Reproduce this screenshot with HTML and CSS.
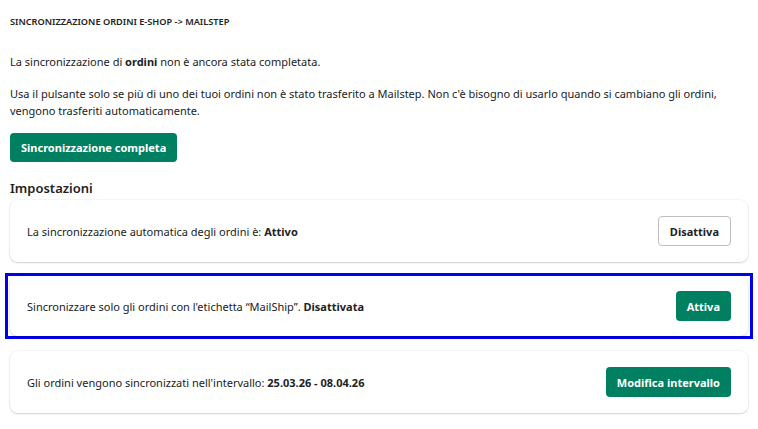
FILE: index.html
```html
<!DOCTYPE html>
<html lang="it">
<head>
    <meta charset="UTF-8">
    <meta name="viewport" content="width=device-width, initial-scale=1.0">
    <title>Sincronizzazione ordini</title>
    <link rel="stylesheet" href="styles.css">
</head>
<body>

<!-- Intro -->
<section class="sync">
    <h1 class="sync-title">SINCRONIZZAZIONE ORDINI E-SHOP -&gt; MAILSTEP</h1>
    <p class="sync-text">La sincronizzazione di <b>ordini</b> non è ancora stata completata.</p>
    <p class="sync-text">Usa il pulsante solo se più di uno dei tuoi ordini non è stato trasferito a Mailstep. Non c'è bisogno di usarlo quando si cambiano gli ordini, vengono trasferiti automaticamente.</p>
    <button type="button" class="btn btn-primary btn-sync">Sincronizzazione completa</button>
</section>

<!-- Settings -->
<section class="settings">
    <h2 class="settings-title">Impostazioni</h2>

    <div class="card">
        <span>La sincronizzazione automatica degli ordini è: <b>Attivo</b></span>
        <button type="button" class="btn btn-secondary">Disattiva</button>
    </div>

    <div class="focus-ring">
        <div class="card">
            <span>Sincronizzare solo gli ordini con l'etichetta “MailShip”. <b>Disattivata</b></span>
            <button type="button" class="btn btn-primary">Attiva</button>
        </div>
    </div>

    <div class="card">
        <span>Gli ordini vengono sincronizzati nell'intervallo: <b>25.03.26 - 08.04.26</b></span>
        <button type="button" class="btn btn-primary">Modifica intervallo</button>
    </div>
</section>

</body>
</html>
```

FILE: styles.css
```css
body {
    font-family: 'Noto Sans', sans-serif;
    font-size: 11px;
    margin: 0;
    padding: 0 10px;
    background-color: #fff;
    color: #202223;
}

.sync-title {
    font-size: 9.2px;
    font-weight: 600;
    margin: 0;
    padding-top: 15px;
    line-height: 13px;
}

.sync-text {
    margin: 0;
    line-height: 17px;
}

.sync-title + .sync-text {
    margin-top: 25px;
}

.sync-text + .sync-text {
    margin-top: 15px;
}

.btn {
    font-family: inherit;
    font-size: 11px;
    font-weight: 700;
    border-radius: 4px;
    cursor: pointer;
    padding: 0 11px;
    height: 30px;
}

.btn-primary {
    background-color: #008060;
    color: white;
    border: none;
}

.btn-secondary {
    background-color: white;
    color: #202223;
    border: 1px solid #babfc3;
}

.btn-sync {
    margin-top: 14px;
    height: 29px;
}

.settings-title {
    font-size: 13px;
    font-weight: 600;
    margin: 17px 0 3px;
    line-height: 18px;
}

.card {
    display: flex;
    justify-content: space-between;
    align-items: center;
    height: 62px;
    padding: 0 17px;
    box-sizing: border-box;
    background-color: white;
    border-radius: 8px;
    box-shadow: 0 1px 2px rgba(0, 0, 0, 0.15), 0 0 0 1px rgba(63, 63, 68, 0.04);
    margin-bottom: 12px;
}

.card:first-of-type {
    margin-bottom: 11px;
}

.focus-ring {
    border: 3px solid #0000f0;
    margin: 0 -5px 12px;
    padding: 0 2px;
}

.focus-ring .card {
    height: 60px;
    margin-bottom: 0;
}
```
